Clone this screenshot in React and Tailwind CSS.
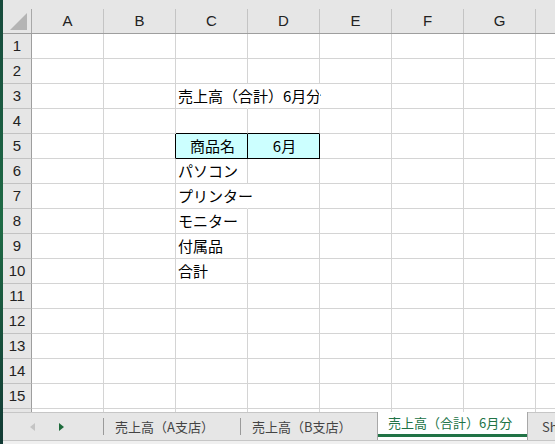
import React from 'react';

const cols = ['A', 'B', 'C', 'D', 'E', 'F', 'G', 'H'];
const rows = Array.from({ length: 16 }, (_, i) => i + 1);

// cell contents, keyed like Excel
const cells = {
  C3: '売上高（合計）6月分',
  C5: '商品名',
  D5: '6月',
  C6: 'パソコン',
  C7: 'プリンター',
  C8: 'モニター',
  C9: '付属品',
  C10: '合計',
};

const cellClass = (key) => {
  switch (key) {
    case 'B5':
      return 'border-r-black';
    case 'C4':
    case 'D4':
      return 'border-b-black';
    case 'C5':
    case 'D5':
      return 'border-r-black border-b-black bg-[#ccffff] justify-center';
    case 'C3':
    case 'D3':
    case 'C7':
      return 'border-r-white';
    default:
      return '';
  }
};

const tabs = [
  { label: '売上高（A支店）', w: 'w-[137px]' },
  { label: '売上高（B支店）', w: 'w-[137px]' },
];

export default function App() {
  return (
    <div className="flex w-[555px] h-[444px] overflow-hidden bg-white font-['Noto_Sans_CJK_JP',sans-serif] text-black">
      <div className="w-[3px] shrink-0 bg-gradient-to-b from-[#174a3c] via-[#1f6b45] to-[#123a34]" />
      <div className="flex flex-col flex-1 min-w-0">
        {/* column header */}
        <div className="h-[34px] shrink-0 flex flex-col bg-[#e6e6e6]">
          <div className="h-[9px]" />
          <div className="flex flex-1 border-b border-[#9e9e9e]">
            <div className="w-[29px] shrink-0 border-r border-[#a8a8a8] flex items-end justify-end pr-[4px] pb-[3px]">
              <svg width="17" height="17" viewBox="0 0 17 17">
                <polygon points="17,0 17,17 0,17" fill="#b4b4b4" />
              </svg>
            </div>
            {cols.map((c) => (
              <div
                key={c}
                className="w-[72px] shrink-0 border-r border-[#c4c4c4] flex items-center justify-center text-[15px] font-['Liberation_Sans',sans-serif] text-[#222]"
              >
                {c}
              </div>
            ))}
          </div>
        </div>

        {/* rows */}
        <div className="flex-1 min-h-0 overflow-hidden">
          {rows.map((r) => (
            <div key={r} className="flex h-[25px]">
              <div className="w-[29px] shrink-0 bg-[#e6e6e6] border-r border-b border-r-[#9e9e9e] border-b-[#c2c2c2] flex items-center justify-center text-[15px] font-['Liberation_Sans',sans-serif] text-[#222]">
                {r}
              </div>
              {cols.map((c) => {
                const key = c + r;
                return (
                  <div
                    key={key}
                    className={`w-[72px] shrink-0 border-r border-b border-[#d4d4d4] flex items-center pl-[2px] text-[15px] whitespace-nowrap overflow-visible ${cellClass(key)}`}
                  >
                    {cells[key] || ''}
                  </div>
                );
              })}
            </div>
          ))}
        </div>

        {/* sheet tabs */}
        <div className="h-[28px] shrink-0 flex bg-[#e6e6e6] border-t border-[#c6c6c6] text-[13px] text-[#444]">
          <div className="w-[100px] shrink-0 flex items-center">
            <svg className="ml-[27px]" width="5" height="8" viewBox="0 0 5 8">
              <polygon points="5,0 5,8 0,4" fill="#c4c4c4" />
            </svg>
            <svg className="ml-[24px]" width="5" height="8" viewBox="0 0 5 8">
              <polygon points="0,0 0,8 5,4" fill="#1e6b3c" />
            </svg>
          </div>
          {tabs.map((t) => (
            <div key={t.label} className={`${t.w} shrink-0 flex items-center`}>
              <div className="w-px h-[17px] bg-[#9a9a9a]" />
              <span className="pl-[11px]">{t.label}</span>
            </div>
          ))}
          <div className="w-[151px] shrink-0 -mt-px bg-white border-x border-[#a8a8a8] flex flex-col">
            <div className="flex-1 flex items-center pl-[10px] text-[#217346]">売上高（合計）6月分</div>
            <div className="h-[3px] bg-[#217346] mb-[3px]" />
          </div>
          <div className="flex items-center pl-[14px]">Sheet4</div>
        </div>
        <div className="h-[4px] shrink-0 border-t border-[#c6c6c6] bg-[#f0f0f0]" />
      </div>
    </div>
  );
}
